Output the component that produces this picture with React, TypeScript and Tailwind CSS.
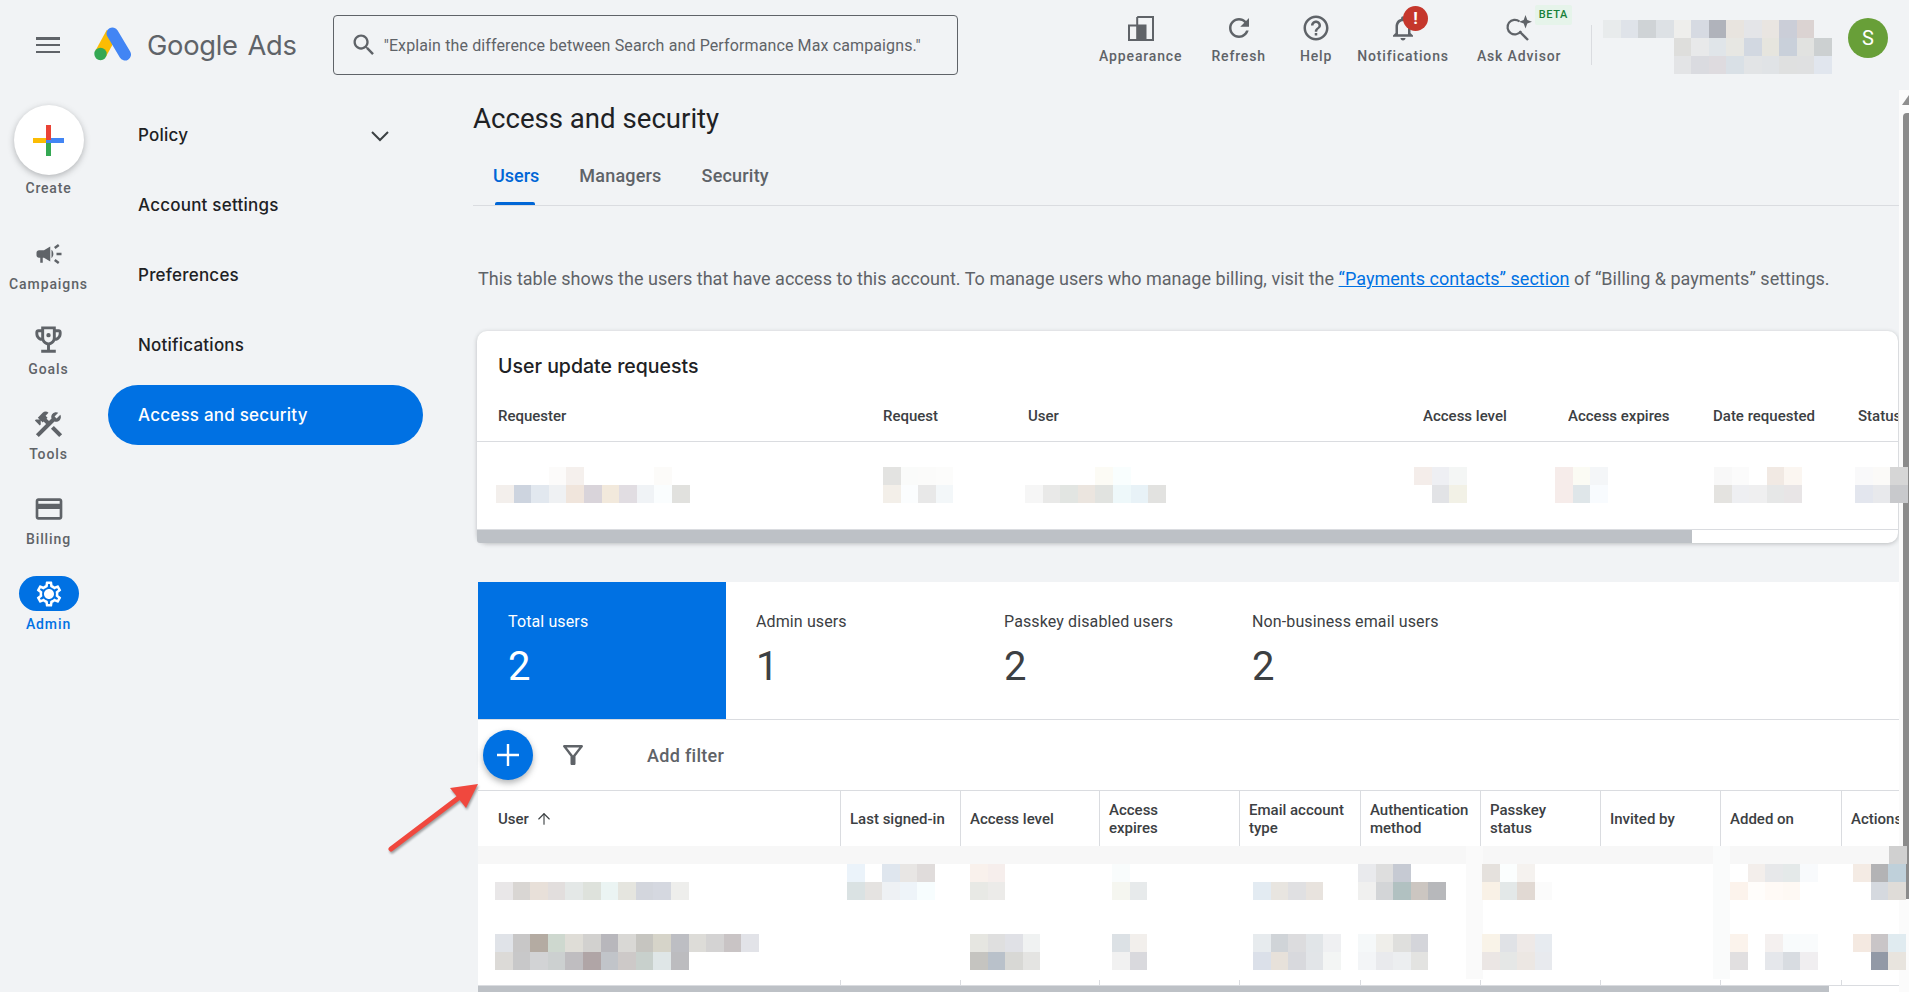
import React from "react";
import { ArrowUp } from "lucide-react";

type Tile = string | null;

function Blur({ rows }: { rows: Tile[][] }) {
  return (
    <div className="relative z-10 flex flex-col">
      {rows.map((row, r) => (
        <div key={r} className="flex h-[18px]">
          {row.map((c, i) => (
            <div key={i} className="h-[18px] w-[17.6px] shrink-0" style={{ backgroundColor: c ? "#" + c : "transparent" }} />
          ))}
        </div>
      ))}
    </div>
  );
}

function Ico({ d, size = 30, className = "" }: { d: string; size?: number; className?: string }) {
  return (
    <svg width={size} height={size} viewBox="0 0 24 24" fill="currentColor" className={"shrink-0 " + className}>
      <path d={d} />
    </svg>
  );
}

const P = {
  search: "M15.5 14h-.79l-.28-.27C15.41 12.59 16 11.11 16 9.5 16 5.91 13.09 3 9.5 3S3 5.91 3 9.5 5.91 16 9.5 16c1.61 0 3.09-.59 4.23-1.57l.27.28v.79l5 4.99L20.49 19l-4.99-5zm-6 0C7.01 14 5 11.99 5 9.5S7.01 5 9.5 5 14 7.01 14 9.5 11.99 14 9.5 14z",
  refresh: "M17.65 6.35C16.2 4.9 14.21 4 12 4c-4.42 0-7.99 3.58-7.99 8s3.57 8 7.99 8c3.73 0 6.84-2.55 7.73-6h-2.08c-.82 2.33-3.04 4-5.65 4-3.31 0-6-2.69-6-6s2.69-6 6-6c1.66 0 3.14.69 4.22 1.78L13 11h7V4l-2.35 2.35z",
  help: "M11 18h2v-2h-2v2zm1-16C6.48 2 2 6.48 2 12s4.48 10 10 10 10-4.48 10-10S17.52 2 12 2zm0 18c-4.41 0-8-3.59-8-8s3.59-8 8-8 8 3.59 8 8-3.59 8-8 8zm0-14c-2.21 0-4 1.79-4 4h2c0-1.1.9-2 2-2s2 .9 2 2c0 2-3 1.75-3 5h2c0-2.25 3-2.5 3-5 0-2.21-1.79-4-4-4z",
  bell: "M12 22c1.1 0 2-.9 2-2h-4c0 1.1.9 2 2 2zm6-6v-5c0-3.07-1.63-5.64-4.5-6.32V4c0-.83-.67-1.5-1.5-1.5s-1.5.67-1.5 1.5v.68C7.64 5.36 6 7.92 6 11v5l-2 2v1h16v-1l-2-2zm-2 1H8v-6c0-2.48 1.51-4.5 4-4.5s4 2.02 4 4.5v6z",
  campaign: "M18 11v2h4v-2h-4zm-2 6.61c.96.71 2.21 1.65 3.2 2.39.4-.53.8-1.07 1.2-1.6-.99-.74-2.24-1.68-3.2-2.4-.4.54-.8 1.08-1.2 1.61zM20.4 5.6c-.4-.53-.8-1.07-1.2-1.6-.99.74-2.24 1.68-3.2 2.4.4.53.8 1.07 1.2 1.6.96-.72 2.21-1.65 3.2-2.4zM4 9c-1.1 0-2 .9-2 2v2c0 1.1.9 2 2 2h1v4h2v-4h1l5 3V6L8 9H4zm11.5 3c0-1.33-.58-2.53-1.5-3.35v6.69c.92-.81 1.5-2.01 1.5-3.34z",
  trophy: "M19 5h-2V3H7v2H5c-1.1 0-2 .9-2 2v1c0 2.55 1.92 4.63 4.39 4.94.63 1.5 1.98 2.63 3.61 2.96V19H7v2h10v-2h-4v-3.1c1.63-.33 2.98-1.46 3.61-2.96C19.08 12.63 21 10.55 21 8V7c0-1.1-.9-2-2-2zM5 8V7h2v3.82C5.84 10.4 5 9.3 5 8zm7 6c-1.65 0-3-1.35-3-3V5h6v6c0 1.65-1.35 3-3 3zm7-6c0 1.3-.84 2.4-2 2.82V7h2v1zM12 7.5a1.5 1.5 0 1 0 0 3 1.5 1.5 0 0 0 0-3z",
  tools: "M13.783 15.172l2.121-2.121 5.996 5.996-2.121 2.121zM17.5 10c1.93 0 3.5-1.57 3.5-3.5 0-.58-.16-1.12-.41-1.6l-2.7 2.7-1.49-1.49 2.7-2.7c-.48-.25-1.02-.41-1.6-.41C15.57 3 14 4.57 14 6.5c0 .41.08.8.21 1.16l-1.85 1.85-1.78-1.78.71-.71-1.41-1.41L12 3.49c-1.17-1.17-3.07-1.17-4.24 0L4.22 7.03l1.41 1.41H2.81l-.71.71 3.54 3.54.71-.71V9.15l1.41 1.41.71-.71 1.78 1.78-7.41 7.41 2.12 2.12L16.34 9.79c.36.13.75.21 1.16.21z",
  card: "M20 4H4c-1.11 0-1.99.89-1.99 2L2 18c0 1.11.89 2 2 2h16c1.11 0 2-.89 2-2V6c0-1.11-.89-2-2-2zm0 14H4v-6h16v6zm0-10H4V6h16v2z",
  gear: "M19.43 12.98c.04-.32.07-.64.07-.98 0-.34-.03-.66-.07-.98l2.11-1.65c.19-.15.24-.42.12-.64l-2-3.46c-.09-.16-.26-.25-.44-.25-.06 0-.12.01-.17.03l-2.49 1c-.52-.4-1.08-.73-1.69-.98l-.38-2.65C14.46 2.18 14.25 2 14 2h-4c-.25 0-.46.18-.49.42l-.38 2.65c-.61.25-1.17.59-1.69.98l-2.49-1c-.06-.02-.12-.03-.18-.03-.17 0-.34.09-.43.25l-2 3.46c-.13.22-.07.49.12.64l2.11 1.65c-.04.32-.07.65-.07.98 0 .33.03.66.07.98l-2.11 1.65c-.19.15-.24.42-.12.64l2 3.46c.09.16.26.25.44.25.06 0 .12-.01.17-.03l2.49-1c.52.4 1.08.73 1.69.98l.38 2.65c.03.24.24.42.49.42h4c.25 0 .46-.18.49-.42l.38-2.65c.61-.25 1.17-.59 1.69-.98l2.49 1c.06.02.12.03.18.03.17 0 .34-.09.43-.25l2-3.46c.12-.22.07-.49-.12-.64l-2.11-1.65zm-1.98-1.71c.04.31.05.52.05.73 0 .21-.02.43-.05.73l-.14 1.13.89.7 1.08.84-.7 1.21-1.27-.51-1.04-.42-.9.68c-.43.32-.84.56-1.25.73l-1.06.43-.16 1.13-.2 1.35h-1.4l-.19-1.35-.16-1.13-1.06-.43c-.43-.18-.83-.41-1.23-.71l-.91-.7-1.06.43-1.27.51-.7-1.21 1.08-.84.89-.7-.14-1.13c-.03-.31-.05-.54-.05-.74s.02-.43.05-.73l.14-1.13-.89-.7-1.08-.84.7-1.21 1.27.51 1.04.42.9-.68c.43-.32.84-.56 1.25-.73l1.06-.43.16-1.13.2-1.35h1.39l.19 1.35.16 1.13 1.06.43c.43.18.83.41 1.23.71l.91.7 1.06-.43 1.27-.51.7 1.21-1.07.85-.89.7.14 1.13zM12 8c-2.21 0-4 1.79-4 4s1.79 4 4 4 4-1.79 4-4-1.79-4-4-4z",
  filter: "M7 6h10l-5.01 6.3L7 6zm-2.75-.39C6.27 8.2 10 13 10 13v6c0 .55.45 1 1 1h2c.55 0 1-.45 1-1v-6s3.72-4.8 5.74-7.39c.51-.66.04-1.61-.79-1.61H5.04c-.83 0-1.3.95-.79 1.61z",
};

function Logo() {
  return (
    <svg width="38" height="34" viewBox="0 0 38 34">
      <path d="M18 6 L6.5 27" stroke="#fbbc04" strokeWidth="12" fill="none" />
      <path d="M18.5 6.5 L31 27.5" stroke="#4285f4" strokeWidth="12" strokeLinecap="round" fill="none" />
      <circle cx="6.5" cy="27" r="6.2" fill="#34a853" />
    </svg>
  );
}

function CreatePlus() {
  return (
    <svg width="31" height="31" viewBox="0 0 31 31">
      <rect x="0" y="13" width="14" height="5" fill="#fbbc04" />
      <rect x="13" y="13" width="18" height="5" fill="#4285f4" />
      <rect x="13" y="0" width="5" height="15" fill="#ea4335" />
      <rect x="13" y="18" width="5" height="13" fill="#34a853" />
    </svg>
  );
}

function AppearanceIcon() {
  return (
    <svg width="28" height="28" viewBox="0 0 28 28" fill="none">
      <path d="M10.2 3v23M10.2 3H26v23H2V11.5h8.2" stroke="#5f6368" strokeWidth="2" />
      <rect x="10" y="10.5" width="9.5" height="15" fill="#5f6368" />
    </svg>
  );
}

function AdvisorIcon() {
  return (
    <svg width="28" height="28" viewBox="0 0 28 28" fill="none">
      <path d="M14.5 7.5A7.3 7.3 0 1 0 16 17" stroke="#5f6368" strokeWidth="2.2" />
      <path d="M14.5 17.5 L23 26" stroke="#5f6368" strokeWidth="2.4" />
      <path d="M20.5 1 L22.3 6 L27 7.8 L22.3 9.6 L20.5 14.6 L18.7 9.6 L14 7.8 L18.7 6 Z" fill="#5f6368" />
    </svg>
  );
}

function Chevron() {
  return (
    <svg width="20" height="12" viewBox="0 0 20 12" fill="none">
      <path d="M2 2 L10 10 L18 2" stroke="#3c4043" strokeWidth="2" />
    </svg>
  );
}

function RedArrow() {
  return (
    <svg width="92" height="72" viewBox="0 0 92 72" fill="none" className="absolute right-[-1px] top-[-6px] drop-shadow-[1px_2px_1px_rgba(0,0,0,0.35)]">
      <path d="M4 66 L74 13" stroke="#f0483e" strokeWidth="5" strokeLinecap="round" />
      <path d="M91 1 L79 25 L63 5 Z" fill="#f0483e" />
    </svg>
  );
}

function Tool({ icon, label, className = "" }: { icon: React.ReactNode; label: string; className?: string }) {
  return (
    <div className={"relative flex flex-col items-center gap-[4px] " + className}>
      <div className="flex h-[30px] items-center justify-center">{icon}</div>
      <span className="text-[14px] font-medium leading-[18px] tracking-[0.85px] whitespace-nowrap">{label}</span>
    </div>
  );
}

function RailItem({ d, label, size = 30 }: { d: string; label: string; size?: number }) {
  return (
    <div className="flex flex-col items-center gap-[6px]">
      <div className="flex h-[30px] w-[30px] items-center justify-center">
        <Ico d={d} size={size} />
      </div>
      <span className="text-[14px] font-medium leading-[18px] tracking-[0.9px]">{label}</span>
    </div>
  );
}

const headTiles: Tile[][] = [
  ["e8ebec", "dfe3e9", "cfd3d6", "dde1e5", "eeeeec", "d6dae2", "b0b3bb", "e8e4df", "e4e5e8", "e9e5e1", "cbced8", "dbd3d2"],
  [null, null, null, null, "dededc", "e8e9ea", "e0e5e9", "e7e7e3", "d2d8e1", "e6e5de", "c9d0da", "e1e2e0", "ccd0d1"],
  [null, null, null, null, "e3e4e6", "dadbe0", "dedbdf", "d9e0e6", "e2e4e6", "e0e3e6", "dfe0e0", "dfe0e1", "e1e6ee"],
];

const req: { label: string; cls: string; tileCls: string; tiles: Tile[][] }[] = [
  { label: "Requester", cls: "w-[406px] pl-[21px]", tileCls: "w-[406px] pl-[19px]", tiles: [[null, null, null, "fcfbfa", "f5f0ed", null, null, null, null, "fcfbf9"], ["f3efec", "cdd4df", "e2e8ef", "eff1f3", "f0e5dc", "d9d4da", "f2e9dc", "e1dde2", "f0f3f6", "fafdfe", "e1e1de"]] },
  { label: "Request", cls: "w-[145px]", tileCls: "w-[145px]", tiles: [["e3e3e1", "fafbfa", "fbfbfa", "fcfcfb"], ["f3efe9", "fbfdfe", "e8e8e8", "f3f7f9"]] },
  { label: "User", cls: "w-[395px]", tileCls: "w-[389px] -ml-[3px]", tiles: [[null, null, null, null, "fcfbf5", "f9fefe"], ["f6f6f6", "e9e9e8", "e2e5e2", "ebe5df", "e1e3e0", "eef8fa", "e8f2f7", "e2e2e0"]] },
  { label: "Access level", cls: "w-[145px]", tileCls: "w-[141px]", tiles: [["f4edea", "eeeff3", "f4f6f5"], [null, "e2e3e6", "f2f1e6"]] },
  { label: "Access expires", cls: "w-[145px]", tileCls: "w-[159px]", tiles: [["f6ecea", "fbfbf4", "f4f6f8"], ["f6ecea", "dfe6e9", "f8fbfe"]] },
  { label: "Date requested", cls: "w-[145px]", tileCls: "w-[141px]", tiles: [["f8f8f8", "fbfbfb", null, "f1e9e3", "fbf6f1"], ["e4e3e0", "eeeff2", "efeff0", "e6e7e7", "e8e5e6"]] },
  { label: "Status", cls: "w-[40px]", tileCls: "w-[40px]", tiles: [["f9f9fa", "fbfaf8", "d6d6d6"], ["e3e6ee", "e8e9ec", "c8c9cc"]] },
];

const gridCols = "grid grid-cols-[362px_120px_139px_140px_121px_120px_120px_120px_121px_58px]";

const cols: { h: React.ReactNode; off: string; r1: Tile[][]; r2: Tile[][] }[] = [
  {
    h: (
      <span className="flex items-center gap-[6px] pl-[10px]">
        User <ArrowUp size={18} strokeWidth={1.5} />
      </span>
    ),
    off: "ml-[17px]",
    r1: [[], ["e9e7e8", "d9d6d3", "e8e0d9", "e2dedd", "e4e8e7", "dee2dc", "ebf4f3", "e5e5df", "d3d6dd", "d5d8e0", "eeeeec"]],
    r2: [["e0e3e8", "c8c7c7", "b4aba2", "ced8cf", "dfddd7", "d2d1cf", "b8b7bc", "d9d8d5", "c6c5c0", "d6d4c9", "bdbec3", "dddcd8", "d4d3d3", "c9c4c5", "e2e3e8"], ["dcdad7", "c8c8c9", "d2d3d5", "ccd0d0", "bfbdc0", "b0a5a6", "c1c4c9", "cdc9c8", "c8d0cc", "dfe6e7", "bcbcbf"]],
  },
  { h: "Last signed-in", off: "ml-[7px]", r1: [["ebf3fa", null, "dfe6ee", "e8e6e4", "e0dcdb"], ["dae2e3", "e5e3e1", "eef1f4", "eef4f9", "f7fdfe"]], r2: [] },
  { h: "Access level", off: "ml-[10px]", r1: [["f9f1ec", "f6eeec"], ["e8e9e5", "ecebe9"]], r2: [["e6e6e1", "dfdfdf", "e0e1e6", "f0f2f2"], ["c5c4c0", "b9c1ca", "d8d8d5", "e4e4e2"]] },
  { h: <>Access<br />expires</>, off: "ml-[13px]", r1: [["f9fcfc"], ["f5f6f0", "e7eaeb"]], r2: [["dce1e5", "f2efec"], ["f1f1f1", "d9d9dd"]] },
  { h: <>Email account<br />type</>, off: "ml-[14px]", r1: [[], ["e3ebf2", "e8e5e0", "e0e0e2", "e8e3de"]], r2: [["e7ebee", "d0d4d8", "dcdcde", "e1e5e8", "eff0f2"], ["dbe0e9", "e7e1da", "d8d9dd", "e2e5e8", "f3f5f4"]] },
  { h: <>Authentication<br />method</>, off: "-ml-[2px]", r1: [["e9eaed", "dedede", "c6cad3"], ["f0f0ef", "d3d5d7", "b1c1c1", "ccc6c1", "b7b8bb"]], r2: [["f5f8f9", "efeeea", "dfdfdd", "d4d5da"], ["f3f5f7", "e9eaed", "eceef0", "e3e3e1"]] },
  { h: <>Passkey<br />status</>, off: "ml-[2px]", r1: [["e5e1dd", "fbfefe", "f5f2ef"], ["f9f1e6", "e3e8e8", "e1d9d3", "fbfbfb"]], r2: [["f9f3e8", "e0e2e6", "eee9e7", "e7ebf0"], ["ebe6e4", "e5e7e6", "ece7e3", "e8eaee"]] },
  { h: "Invited by", off: "", r1: [], r2: [] },
  { h: "Added on", off: "ml-[10px]", r1: [[null, "f3eeeb", "e7e8ea", "e4e9e9", "f8fafc"], ["fcf3ec", "fffdfb", "fffaf6", "fef9f4"]], r2: [["fbf3ec", null, "f4f0ef", "f8fbfc", "f9fbfc"], ["e1dfe0", null, "e5e7eb", "d8dce1", "f0eef0"]] },
  { h: "Actions", off: "ml-[12px]", r1: [["f4ebe4", "b3b3b5", "bfd0da"], [null, "d5d9df", "dfdcd8"]], r2: [["f4e9e1", "c9c5c7", "e0ebf0"], [null, "9299a6", "e8e4de"]] },
];

const stats = [
  { l: "Admin users", v: "1" },
  { l: "Passkey disabled users", v: "2" },
  { l: "Non-business email users", v: "2" },
];

const navItem = "flex h-[60px] w-[315px] items-center pt-[2px] pl-[30px]";

export default function App() {
  return (
    <div className="h-[992px] w-[1909px] overflow-hidden bg-[#f1f3f5] font-['Roboto',sans-serif] text-[#5f6368]">
      {/* Header */}
      <header className="flex h-[90px] items-start">
        <div className="mt-[37px] ml-[36px] flex h-[16px] w-[24px] flex-col justify-between">
          <div className="h-[2.5px] bg-[#5f6368]" />
          <div className="h-[2.5px] bg-[#5f6368]" />
          <div className="h-[2.5px] bg-[#5f6368]" />
        </div>
        <div className="mt-[27px] ml-[34px]">
          <Logo />
        </div>
        <div className="mt-[26px] ml-[15px] font-['Inter',sans-serif] text-[27.3px] leading-[40px] tracking-[-0.3px] whitespace-nowrap">
          Google<span className="ml-[10px]">Ads</span>
        </div>
        <div className="mt-[15px] ml-[36px] flex h-[60px] w-[625px] items-center rounded-[4px] border border-[#5f6368] pt-[1px] pl-[16px]">
          <Ico d={P.search} size={28} className="-mt-[1px]" />
          <span className="ml-[6px] text-[16px] tracking-[0.12px] whitespace-nowrap">"Explain the difference between Search and Performance Max campaigns."</span>
        </div>
        <div className="mt-[13px] ml-auto flex items-start pr-[21px]">
          <Tool icon={<AppearanceIcon />} label="Appearance" />
          <Tool className="ml-[29px]" icon={<Ico d={P.refresh} />} label="Refresh" />
          <Tool className="ml-[34px]" icon={<Ico d={P.help} />} label="Help" />
          <Tool
            className="ml-[25px]"
            icon={
              <>
                <Ico d={P.bell} />
                <span className="absolute left-[46px] top-[-7px] flex h-[25px] w-[25px] items-center justify-center rounded-full bg-[#c5372c] text-[17px] font-bold text-white">!</span>
              </>
            }
            label="Notifications"
          />
          <Tool
            className="ml-[28px]"
            icon={
              <>
                <AdvisorIcon />
                <span className="absolute left-[58px] top-[-8px] flex h-[20px] w-[37px] items-center justify-center rounded-[2px] bg-[#e6f4ea] text-[11px] font-medium tracking-[0.6px] text-[#188038]">BETA</span>
              </>
            }
            label="Ask Advisor"
          />
          <div className="mt-[12px] ml-[30px] h-[40px] w-px bg-[#dadce0]" />
          <div className="mt-[7px] ml-[11px]">
            <Blur rows={headTiles} />
          </div>
          <div className="mt-[5px] ml-[16px] flex h-[40px] w-[40px] items-center justify-center rounded-full bg-[#689f38] text-[20px] text-white">S</div>
        </div>
      </header>

      <div className="flex h-[902px]">
        {/* Rail */}
        <nav className="flex w-[97px] shrink-0 flex-col items-center pt-[15px]">
          <div className="flex h-[70px] w-[70px] items-center justify-center rounded-full bg-white shadow-[0_2px_6px_rgba(60,64,67,0.35)]">
            <CreatePlus />
          </div>
          <span className="mt-[4px] text-[14px] font-medium leading-[18px] tracking-[0.8px]">Create</span>
          <div className="mt-[42px] flex flex-col gap-[31px]">
            <RailItem d={P.campaign} label="Campaigns" />
            <RailItem d={P.trophy} size={35} label="Goals" />
            <RailItem d={P.tools} size={33} label="Tools" />
            <RailItem d={P.card} size={32} label="Billing" />
          </div>
          <div className="mt-[28px] flex h-[35px] w-[60px] items-center justify-center rounded-full bg-[#0071e3] text-white">
            <Ico d={P.gear} />
          </div>
          <span className="mt-[4px] text-[14px] font-medium leading-[18px] tracking-[0.9px] text-[#0071e3]">Admin</span>
        </nav>

        {/* Secondary nav */}
        <div className="flex w-[376px] shrink-0 flex-col gap-[10px] pt-[15px] pl-[11px] font-['Inter',sans-serif] text-[17px] font-medium tracking-[0.22px] text-[#202124]">
          <div className={navItem + " justify-between pr-[33px]"}>
            <span>Policy</span>
            <Chevron />
          </div>
          <div className={navItem}>Account settings</div>
          <div className={navItem}>Preferences</div>
          <div className={navItem}>Notifications</div>
          <div className={navItem + " rounded-full bg-[#0071e3] text-white"}>Access and security</div>
        </div>

        {/* Main */}
        <main className="w-[1426px] shrink-0">
          <h1 className="flex h-[56px] items-center pt-[2px] text-[27.6px] leading-[36px] font-normal text-[#202124]">Access and security</h1>
          <div className="flex h-[60px] border-b border-[#dadce0] text-[18px] font-medium">
            <div className="relative flex h-[59px] items-center px-[20px] text-[#0066d6]">
              Users
              <div className="absolute right-[24px] bottom-0 left-[22px] h-[3px] rounded-t-[2px] bg-[#0066d6]" />
            </div>
            <div className="flex h-[59px] items-center px-[20px] tracking-[0.2px]">Managers</div>
            <div className="flex h-[59px] items-center px-[20px] tracking-[0.2px]">Security</div>
          </div>
          <p className="mt-[62px] ml-[5px] h-[22px] text-[18px] leading-[22px] tracking-[0.022px] whitespace-nowrap">
            This table shows the users that have access to this account. To manage users who manage billing, visit the{" "}
            <a className="text-[#0071e3] underline">“Payments contacts” section</a> of “Billing &amp; payments” settings.
          </p>

          {/* Requests card */}
          <section className="mt-[41px] ml-[4px] w-[1421px] rounded-[10px] bg-white shadow-[0_1px_4px_rgba(60,64,67,0.3)]">
            <h2 className="h-[60px] pt-[23px] pl-[21px] font-['Inter',sans-serif] text-[19.5px] leading-[24px] font-medium text-[#202124]">User update requests</h2>
            <div className="flex h-[51px] items-center border-b border-[#dadce0] text-[15px] font-medium text-[#3c4043]">
              {req.map((c) => (
                <div key={c.label} className={"shrink-0 overflow-hidden whitespace-nowrap " + c.cls}>
                  {c.label}
                </div>
              ))}
            </div>
            <div className="flex h-[87px] pt-[25px]">
              {req.map((c) => (
                <div key={c.label} className={"shrink-0 " + c.tileCls}>
                  <Blur rows={c.tiles} />
                </div>
              ))}
            </div>
            <div className="h-[14px] overflow-hidden rounded-b-[3px] border-t border-[#dadce0]">
              <div className="h-[13px] w-[1215px] bg-[#bdc1c6]" />
            </div>
          </section>

          {/* Stats */}
          <section className="relative mt-[39px] ml-[5px] w-[1421px] bg-white">
            <div className="flex h-[138px] border-b border-[#dadce0]">
              <div className="h-[137px] w-[248px] bg-[#0071e3] pt-[30px] pl-[30px] text-white">
                <div className="text-[16px] leading-[20px] tracking-[0.12px]">Total users</div>
                <div className="mt-[12px] text-[40px] leading-[46px]">2</div>
              </div>
              {stats.map((s) => (
                <div key={s.l} className="w-[248px] pt-[30px] pl-[30px] text-[#3c4043]">
                  <div className="text-[16px] leading-[20px] tracking-[0.12px] whitespace-nowrap">{s.l}</div>
                  <div className="mt-[12px] text-[40px] leading-[46px]">{s.v}</div>
                </div>
              ))}
            </div>
            <div className="relative flex h-[71px] items-center border-b border-[#dadce0]">
              <div className="ml-[5px] flex h-[50px] w-[50px] items-center justify-center rounded-full bg-[#0071e3] shadow-[0_3px_6px_rgba(60,64,67,0.4)]">
                <svg width="22" height="22" viewBox="0 0 22 22">
                  <path d="M11 0v22M0 11h22" stroke="#fff" strokeWidth="2.4" />
                </svg>
              </div>
              <Ico d={P.filter} className="ml-[25px]" />
              <span className="ml-[59px] pt-[1px] text-[18px] font-medium tracking-[0.3px]">Add filter</span>
              <div className="absolute top-[69px] left-[-92px] h-[72px] w-[92px]">
                <RedArrow />
              </div>
            </div>

            {/* Users table */}
            <div className={gridCols + " h-[55px] text-[15px] leading-[18px] font-medium text-[#3c4043]"}>
              {cols.map((c, i) => (
                <div key={i} className={"flex items-center overflow-hidden whitespace-nowrap " + (i ? "border-l border-[#dadce0] pl-[9px]" : "pl-[10px]")}>
                  {c.h}
                </div>
              ))}
            </div>
            <div className="relative">
              <div className="absolute top-0 left-[988px] h-[133px] w-[17px] bg-[#fafafa]" />
              <div className="absolute top-0 left-[1235px] h-[133px] w-[17px] bg-[#fafbfb]" />
              <div className="flex h-[18px] justify-end bg-[#f7f7f7]">
                <div className="relative z-10 -mr-[8px] h-[18px] w-[18px] bg-[#d0d0d0]" />
              </div>
              <div className={gridCols + " relative h-[70px]"}>
                {cols.map((c, i) => (
                  <div key={i} className={c.off}>
                    <Blur rows={c.r1} />
                  </div>
                ))}
              </div>
              <div className={gridCols + " relative h-[46px]"}>
                {cols.map((c, i) => (
                  <div key={i} className={c.off}>
                    <Blur rows={c.r2} />
                  </div>
                ))}
              </div>
            </div>
            <div className={gridCols + " h-[5px]"}>
              {cols.map((_, i) => (
                <div key={i} className={i ? "border-l border-[#dadce0]" : ""} />
              ))}
            </div>
            <div className="h-[7px] border-t border-[#dadce0]">
              <div className="h-[7px] w-[1351px] bg-[#bdc1c6]" />
            </div>
          </section>
        </main>

        {/* Page scrollbar */}
        <div className="flex w-[10px] shrink-0 flex-col items-end bg-[#fbfbfb]">
          <div className="mt-[5px] h-0 w-0 border-r-[7px] border-b-[10px] border-l-[0px] border-r-transparent border-b-[#8e8e8e] -scale-x-100" />
          <div className="mt-[8px] h-[786px] w-[6px] rounded-tl-[4px] bg-[#8b8b8b]" />
        </div>
      </div>
    </div>
  );
}
